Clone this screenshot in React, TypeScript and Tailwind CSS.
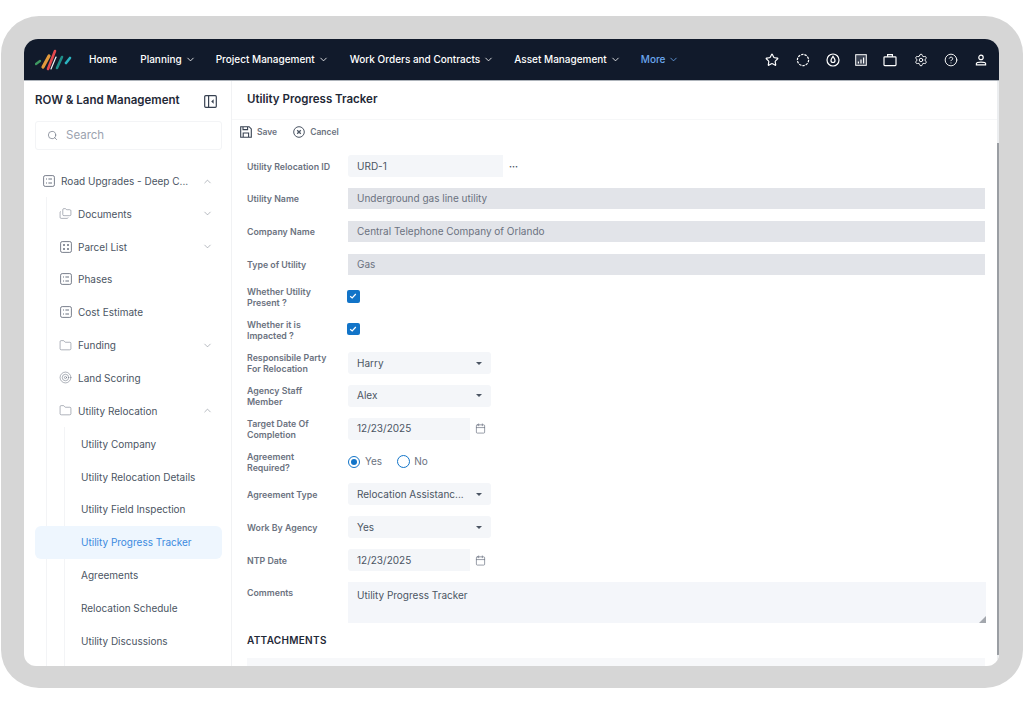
import { Calendar, ChevronDown, ChevronUp, CircleHelp, Folder, Folders, Search, Settings, Star, Target } from "lucide-react";

const navItems = [
    { label: "Home", left: "ml-[16px]", chev: false },
    { label: "Planning", left: "ml-[23px]", chev: true },
    { label: "Project Management", left: "ml-[20px]", chev: true },
    { label: "Work Orders and Contracts", left: "ml-[21px]", chev: true },
    { label: "Asset Management", left: "ml-[20px]", chev: true },
];

function Logo() {
    return (
        <svg width="38" height="22" viewBox="0 0 38 22" className="shrink-0">
            <path d="M1 15 L5 12" stroke="#3f9a62" strokeWidth="2.2" strokeLinecap="round" />
            <path d="M8 18 L14 7" stroke="#e29a3c" strokeWidth="3.2" strokeLinecap="round" />
            <path d="M13 20 L20 2" stroke="#e5484d" strokeWidth="2.6" strokeLinecap="round" />
            <path d="M16 20 L21 8" stroke="#f3f4f6" strokeWidth="1.2" strokeLinecap="round" />
            <path d="M22 19 L27 8" stroke="#1f8f8a" strokeWidth="2.6" strokeLinecap="round" />
            <path d="M31 14 L35 9" stroke="#2bb3c0" strokeWidth="2.6" strokeLinecap="round" />
        </svg>
    );
}

function GridIcon() {
    return (
        <svg width="12" height="12" viewBox="0 0 12 12" fill="none" stroke="#6b7280" strokeWidth="0.9" className="shrink-0">
            <rect x="0.6" y="0.6" width="10.8" height="10.8" rx="1.6" />
            <path d="M3 4h2M3 8h2M7 4h2M7 8h2" strokeWidth="1.4" />
        </svg>
    );
}

function ListIcon() {
    return (
        <svg width="12" height="12" viewBox="0 0 12 12" fill="none" stroke="#6b7280" strokeWidth="0.9" className="shrink-0">
            <rect x="0.6" y="0.6" width="10.8" height="10.8" rx="1.6" />
            <path d="M3 4h1M3 8h1M5.4 4h3.6M5.4 8h3.6" strokeWidth="1" />
        </svg>
    );
}

function TreeRow({ icon, label, chev, pad, active }: { icon?: React.ReactNode; label: string; chev?: "up" | "down"; pad: string; active?: boolean }) {
    return (
        <div className={`flex h-[32.85px] items-center rounded-md ${pad} ${active ? "bg-[#eef6fe] text-[#3b8ae0]" : "text-[#4b5563]"}`}>
            {icon}
            <span className="text-[10px] leading-none whitespace-nowrap">{label}</span>
            {chev === "down" && <ChevronDown size={11} strokeWidth={1.2} className="ml-auto mr-[9px] text-[#7b828d]" />}
            {chev === "up" && <ChevronUp size={11} strokeWidth={1.2} className="ml-auto mr-[9px] text-[#7b828d]" />}
        </div>
    );
}

function Field({ label, children }: { label: React.ReactNode; children: React.ReactNode }) {
    return (
        <div className="flex h-[22px] items-center">
            <div className="w-[101px] shrink-0 text-[8.8px] leading-[11px] font-semibold text-[#6b7280]">{label}</div>
            {children}
        </div>
    );
}

function Disabled({ value }: { value: string }) {
    return <div className="flex h-[21px] w-[637px] items-center bg-[#e2e4e9] px-[9px] text-[10px] text-[#6b7280]">{value}</div>;
}

function SelectBox({ value }: { value: string }) {
    return (
        <div className="flex h-[22px] w-[143px] items-center rounded-[3px] bg-[#f4f6f9] px-[9px] text-[10px] text-[#4b5563]">
            <span className="whitespace-nowrap">{value}</span>
            <span className="ml-auto h-0 w-0 border-x-[3px] border-t-[3px] border-x-transparent border-t-[#4b5563]" />
        </div>
    );
}

function DateBox({ value }: { value: string }) {
    return (
        <div className="flex items-center">
            <div className="flex h-[22px] w-[122px] items-center rounded-l-[3px] bg-[#f4f6f9] px-[9px] text-[10px] text-[#4b5563]">{value}</div>
            <Calendar size={11} strokeWidth={1.5} className="ml-[5px] text-[#6b7280]" />
        </div>
    );
}

function Check() {
    return (
        <div className="-mt-[2px] -ml-px flex h-[12.5px] w-[12.5px] items-center justify-center rounded-[2px] bg-[#1274c8]">
            <svg width="8" height="8" viewBox="0 0 8 8" fill="none" stroke="#fff" strokeWidth="1.2">
                <path d="M1.2 4.2 3.2 6 6.8 2" />
            </svg>
        </div>
    );
}

export default function App() {
    return (
        <div className="h-[705px] w-[1024px] overflow-hidden bg-white pt-[16px] pl-[1px] font-['Inter',sans-serif]">
            <div className="h-[672px] w-[1022px] rounded-[38px] bg-[#d6d6d6] pt-[23px] pl-[23px]">
                <div className="flex h-[627px] w-[975px] flex-col overflow-hidden rounded-t-[14px] rounded-b-[12px] bg-white">
                    <nav className="flex h-[42px] shrink-0 items-center border-b border-[#aeb4bb] bg-[#111a2b] pl-[11px] text-white">
                        <Logo />
                        {navItems.map((n) => (
                            <div key={n.label} className={`flex items-center ${n.left}`}>
                                <span className="text-[10px] font-medium whitespace-nowrap">{n.label}</span>
                                {n.chev && <ChevronDown size={11} strokeWidth={1.8} className="ml-[3px]" />}
                            </div>
                        ))}
                        <div className="ml-[20px] flex items-center text-[#6ba6ee]">
                            <span className="text-[10px] font-medium">More</span>
                            <ChevronDown size={11} strokeWidth={1.8} className="ml-[3px]" />
                        </div>
                        <div className="ml-auto flex items-center pr-[12px]">
                            <Star size={14} strokeWidth={2} />
                            <svg width="14" height="14" viewBox="0 0 14 14" fill="none" stroke="#fff" strokeWidth="1.2" strokeDasharray="2.4 1" className="ml-[17px]">
                                <circle cx="7" cy="7" r="5.6" />
                            </svg>
                            <svg width="14" height="14" viewBox="0 0 14 14" fill="none" stroke="#fff" strokeWidth="1.2" className="ml-[16px]">
                                <circle cx="7" cy="7" r="6" />
                                <path d="M7 3.4C5.9 5 5 6 5 7.5a2 2 0 0 0 4 0C9 6 8.1 5 7 3.4z" />
                            </svg>
                            <svg width="12" height="12" viewBox="0 0 12 12" fill="none" stroke="#fff" strokeWidth="1" className="ml-[15px]">
                                <rect x="0.7" y="0.7" width="10.6" height="10.6" fill="#3a4252" />
                                <path d="M3.4 9.5V7.6M6 9.5V5.6M8.6 9.5V3.4" strokeWidth="1.2" />
                            </svg>
                            <svg width="14" height="14" viewBox="0 0 14 14" fill="none" stroke="#fff" strokeWidth="1.2" className="ml-[16px]">
                                <rect x="1" y="3.8" width="12" height="8.8" rx="0.8" />
                                <path d="M4.6 3.8V1.6h4.8v2.2" />
                            </svg>
                            <Settings size={14} strokeWidth={1.6} className="ml-[17px]" />
                            <CircleHelp size={14} strokeWidth={1.6} className="ml-[16px]" />
                            <svg width="12" height="12" viewBox="0 0 12 12" fill="none" stroke="#fff" strokeWidth="1.2" className="ml-[17px]">
                                <circle cx="6" cy="3.4" r="2.2" />
                                <path d="M1.4 10.8V9.6c0-.8 1.2-1.4 4.6-1.4s4.6.6 4.6 1.4v1.2z" />
                            </svg>
                        </div>
                    </nav>

                    <div className="flex min-h-0 flex-1">
                        <aside className="w-[208px] shrink-0 border-r border-[#f1f2f4] pr-[9px] pl-[11px]">
                            <div className="flex h-[40px] items-center justify-between pr-[5px]">
                                <span className="text-[11.5px] font-semibold whitespace-nowrap text-[#1f2937]">ROW &amp; Land Management</span>
                                <svg width="13" height="13" viewBox="0 0 13 13" fill="none" stroke="#374151" strokeWidth="1.2">
                                    <rect x="0.7" y="0.7" width="11.6" height="11.6" rx="1" />
                                    <path d="M4.6 1v11" />
                                    <path d="M9.6 4.2 7.2 6.5l2.4 2.3z" fill="#374151" stroke="none" />
                                </svg>
                            </div>
                            <div className="flex h-[29px] w-[187px] items-center rounded-[3px] border border-[#f3f4f6] pl-[11px] text-[11.5px] text-[#9ca3af]">
                                <Search size={11} strokeWidth={1.5} className="mr-[8px] text-[#6b7280]" />
                                <span className="pt-[1px]">Search</span>
                            </div>
                            <div className="mt-[15px]">
                                <TreeRow pad="pl-[8px]" label="Road Upgrades - Deep C..." chev="up" icon={<span className="mr-[6px]"><ListIcon /></span>} />
                                <div className="ml-[11px] -mt-[0.5px] border-l border-[#f3f4f6]">
                                    <TreeRow pad="pl-[12px]" label="Documents" chev="down" icon={<Folders size={13} strokeWidth={1} className="mr-[6px] text-[#6b7280]" />} />
                                    <TreeRow pad="pl-[13px]" label="Parcel List" chev="down" icon={<span className="mr-[6px]"><GridIcon /></span>} />
                                    <TreeRow pad="pl-[13px]" label="Phases" icon={<span className="mr-[6px]"><ListIcon /></span>} />
                                    <TreeRow pad="pl-[13px]" label="Cost Estimate" icon={<span className="mr-[6px]"><ListIcon /></span>} />
                                    <TreeRow pad="pl-[12px]" label="Funding" chev="down" icon={<Folder size={13} strokeWidth={1} className="mr-[6px] text-[#6b7280]" />} />
                                    <TreeRow pad="pl-[12px]" label="Land Scoring" icon={<Target size={13} strokeWidth={1} className="mr-[6px] text-[#6b7280]" />} />
                                    <TreeRow pad="pl-[12px]" label="Utility Relocation" chev="up" icon={<Folder size={13} strokeWidth={1} className="mr-[6px] text-[#6b7280]" />} />
                                    <div className="ml-[17px] border-l border-[#f3f4f6]">
                                        <TreeRow pad="pl-[16px]" label="Utility Company" />
                                        <TreeRow pad="pl-[16px]" label="Utility Relocation Details" />
                                        <TreeRow pad="pl-[16px]" label="Utility Field Inspection" />
                                        <div className="-ml-[30px]">
                                            <TreeRow pad="pl-[46px]" label="Utility Progress Tracker" active />
                                        </div>
                                        <TreeRow pad="pl-[16px]" label="Agreements" />
                                        <TreeRow pad="pl-[16px]" label="Relocation Schedule" />
                                        <TreeRow pad="pl-[16px]" label="Utility Discussions" />
                                        <div className="h-[10px]" />
                                    </div>
                                </div>
                            </div>
                        </aside>

                        <main className="flex min-w-0 flex-1 flex-col">
                            <div className="flex h-[39px] shrink-0 items-center border-b border-[#f6f7f8] pl-[15px] text-[11.5px] font-semibold text-[#1f2937]">Utility Progress Tracker</div>
                            <div className="flex h-[24px] shrink-0 items-center pl-[8px] text-[8.5px] font-semibold text-[#6b7280]">
                                <svg width="12" height="12" viewBox="0 0 12 12" fill="none" stroke="#374151" strokeWidth="1.1">
                                    <path d="M0.7 0.7h8.4l2.2 2.2v8.4H0.7z" />
                                    <path d="M3 1v2.6h4.6V1M3.2 11V7h5.4v4" />
                                </svg>
                                <span className="ml-[5px]">Save</span>
                                <svg width="12" height="12" viewBox="0 0 12 12" fill="none" stroke="#4b5563" strokeWidth="1" className="ml-[16px]">
                                    <circle cx="6" cy="6" r="5.3" />
                                    <path d="M4.2 4.2l3.6 3.6M7.8 4.2 4.2 7.8" strokeWidth="1.3" />
                                </svg>
                                <span className="ml-[5px]">Cancel</span>
                            </div>
                            <div className="flex flex-col gap-[10.85px] pt-[11px] pl-[15px]">
                                <Field label="Utility Relocation ID">
                                    <div className="flex h-[22px] w-[155px] items-center rounded-l-[3px] bg-[#f4f6f9] px-[9px] text-[10px] text-[#4b5563]">URD-1</div>
                                    <div className="flex h-[22px] w-[21px] items-center justify-center text-[9px] leading-none font-bold text-[#4b5563]">···</div>
                                </Field>
                                <Field label="Utility Name"><Disabled value="Underground gas line utility" /></Field>
                                <Field label="Company Name"><Disabled value="Central Telephone Company of Orlando" /></Field>
                                <Field label="Type of Utility"><Disabled value="Gas" /></Field>
                                <Field label={<>Whether Utility<br />Present ?</>}><Check /></Field>
                                <Field label={<>Whether it is<br />Impacted ?</>}><Check /></Field>
                                <Field label={<>Responsibile Party<br />For Relocation</>}><SelectBox value="Harry" /></Field>
                                <Field label={<>Agency Staff<br />Member</>}><SelectBox value="Alex" /></Field>
                                <Field label={<>Target Date Of<br />Completion</>}><DateBox value="12/23/2025" /></Field>
                                <Field label={<>Agreement<br />Required?</>}>
                                    <div className="flex items-center text-[10px] text-[#6b7280]">
                                        <span className="flex h-[12px] w-[12px] items-center justify-center rounded-full border border-[#1274c8]">
                                            <span className="h-[6px] w-[6px] rounded-full bg-[#1274c8]" />
                                        </span>
                                        <span className="ml-[5px]">Yes</span>
                                        <span className="ml-[15px] h-[13px] w-[13px] rounded-full border-[1.5px] border-[#1274c8]" />
                                        <span className="ml-[4px]">No</span>
                                    </div>
                                </Field>
                                <Field label="Agreement Type"><SelectBox value="Relocation Assistanc..." /></Field>
                                <Field label="Work By Agency"><SelectBox value="Yes" /></Field>
                                <Field label="NTP Date"><DateBox value="12/23/2025" /></Field>
                                <div className="flex">
                                    <div className="w-[101px] shrink-0 pt-[5px] text-[8.8px] leading-[11px] font-semibold text-[#6b7280]">Comments</div>
                                    <div className="relative h-[41px] w-[638px] bg-[#f4f6fa] px-[9px] pt-[6px] text-[10px] text-[#4b5563]">
                                        Utility Progress Tracker
                                        <svg width="7" height="7" viewBox="0 0 7 7" className="absolute right-0 bottom-0">
                                            <path d="M7 0v7H0z" fill="#a3a7ad" />
                                        </svg>
                                    </div>
                                </div>
                            </div>
                            <div className="mt-[10px] pl-[15px] text-[10px] font-semibold tracking-[0.3px] text-[#1f2937]">ATTACHMENTS</div>
                            <div className="mt-[10px] ml-[15px] h-[10px] w-[738px] bg-[#f7f8fa]" />
                        </main>

                        <div className="w-[2px] shrink-0 bg-[#eceef0]">
                            <div className="mt-[62px] h-[512px] bg-[#9a9ea3]" />
                        </div>
                    </div>
                </div>
            </div>
        </div>
    );
}
